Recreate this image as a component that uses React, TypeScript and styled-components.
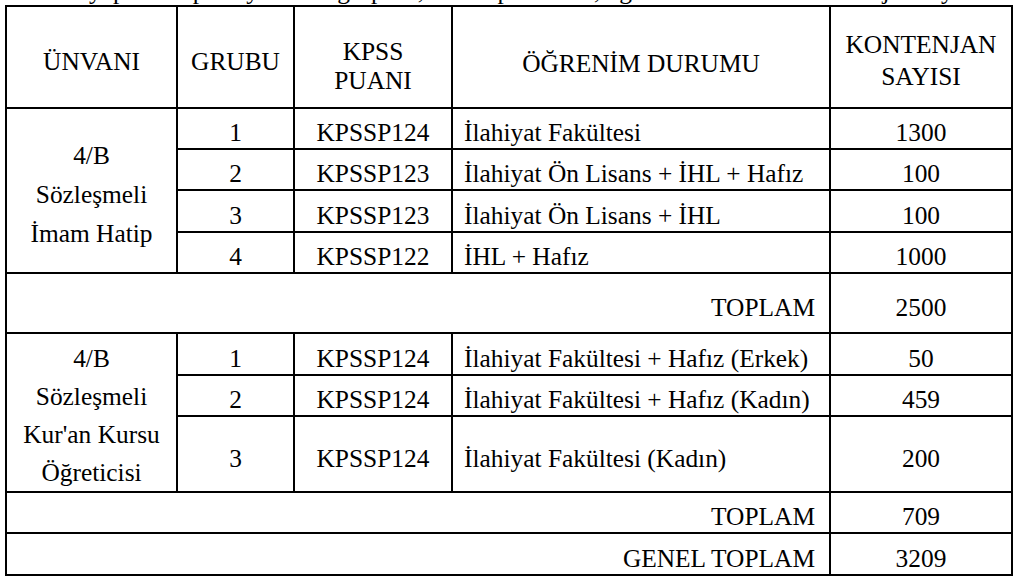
import React from 'react';
import styled, {createGlobalStyle} from 'styled-components';

const GlobalStyle = createGlobalStyle`
    html, body {
        margin: 0;
        padding: 0;
        background: #fff;
    }
    body {
        font-family: "Liberation Serif", "Times New Roman", serif;
        color: #000;
    }
`;

const Page = styled.div`
    width: 1024px;
    height: 585px;
    overflow: hidden;
    padding-left: 5px;
    box-sizing: border-box;
    font-family: "Liberation Serif", "Times New Roman", serif;
`;

// the sentence above the table is cut off by the screenshot, only its descenders show
const CutCaption = styled.div`
    height: 5px;
    overflow: hidden;
    font-size: 25.4px;
    line-height: 29px;
    text-align: center;
    width: 1008px;

    & > span {
        display: block;
        margin-top: -24px;
    }
`;

const Table = styled.table`
    border-collapse: collapse;
    table-layout: fixed;
    width: 1008px;
    font-family: "Liberation Serif", "Times New Roman", serif;
    font-size: 25.4px;
    color: #000;
`;

const Col = styled.col<{ $w: number }>`
    width: ${({$w}) => $w}px;
`;

const Row = styled.tr<{ $h: number }>`
    height: ${({$h}) => $h}px;
`;

type CellProps = {
    $align?: 'left' | 'center' | 'right';
    $nudge?: number;
    $lh?: number;
};

const Cell = styled.td<CellProps>`
    border: 2px solid #000;
    padding: ${({$nudge}) => $nudge ?? 8}px 12px 0 12px;
    text-align: ${({$align}) => $align ?? 'center'};
    vertical-align: middle;
    line-height: ${({$lh}) => $lh ? `${$lh}px` : '29px'};
    white-space: nowrap;
    overflow: hidden;
`;

const LeftCell = styled(Cell)`
    padding-left: 11px;
`;

const SumCell = styled(Cell)`
    padding-right: 14px;
`;

type Line = {
    group: string;
    score: string;
    education: string;
    quota: string;
    height: number;
};

type Block = {
    title: string[];
    titleNudge: number;
    titleLh: number;
    lines: Line[];
    total: string;
    totalHeight: number;
};

const blocks: Block[] = [
    {
        title: ['4/B', 'Sözleşmeli', 'İmam Hatip'],
        titleNudge: 8,
        titleLh: 39,
        lines: [
            {group: '1', score: 'KPSSP124', education: 'İlahiyat Fakültesi', quota: '1300', height: 41},
            {group: '2', score: 'KPSSP123', education: 'İlahiyat Ön Lisans + İHL + Hafız', quota: '100', height: 41},
            {group: '3', score: 'KPSSP123', education: 'İlahiyat Ön Lisans + İHL', quota: '100', height: 42},
            {group: '4', score: 'KPSSP122', education: 'İHL + Hafız', quota: '1000', height: 41},
        ],
        total: '2500',
        totalHeight: 60,
    },
    {
        title: ['4/B', 'Sözleşmeli', "Kur'an Kursu", 'Öğreticisi'],
        titleNudge: 4,
        titleLh: 38,
        lines: [
            {group: '1', score: 'KPSSP124', education: 'İlahiyat Fakültesi + Hafız (Erkek)', quota: '50', height: 42},
            {group: '2', score: 'KPSSP124', education: 'İlahiyat Fakültesi + Hafız (Kadın)', quota: '459', height: 41},
            {group: '3', score: 'KPSSP124', education: 'İlahiyat Fakültesi (Kadın)', quota: '200', height: 76},
        ],
        total: '709',
        totalHeight: 41,
    },
];

const Multiline = ({lines}: { lines: string[] }) => (
    <>
        {lines.map((l, i) => (
            <React.Fragment key={i}>
                {i > 0 && <br/>}
                {l}
            </React.Fragment>
        ))}
    </>
);

export const App = () => {
    return (
        <Page>
            <GlobalStyle/>
            <CutCaption>
                <span>Alımı yapılacak pozisyonların grupları, KPSS puan türü, öğrenim durumu ve kontenjan sayıları aşağıdaki gibidir.</span>
            </CutCaption>
            <Table>
                <colgroup>
                    <Col $w={171}/>
                    <Col $w={117}/>
                    <Col $w={158}/>
                    <Col $w={378}/>
                    <Col $w={182}/>
                </colgroup>
                <tbody>
                    <Row $h={102}>
                        <Cell>ÜNVANI</Cell>
                        <Cell>GRUBU</Cell>
                        <Cell $nudge={18}><Multiline lines={['KPSS', 'PUANI']}/></Cell>
                        <Cell $nudge={13}>ÖĞRENİM DURUMU</Cell>
                        <Cell $lh={32} $nudge={5}><Multiline lines={['KONTENJAN', 'SAYISI']}/></Cell>
                    </Row>
                    {blocks.map((block, b) => (
                        <React.Fragment key={b}>
                            {block.lines.map((line, i) => (
                                <Row $h={line.height} key={i}>
                                    {i === 0 && (
                                        <Cell rowSpan={block.lines.length} $lh={block.titleLh} $nudge={block.titleNudge}>
                                            <Multiline lines={block.title}/>
                                        </Cell>
                                    )}
                                    <Cell>{line.group}</Cell>
                                    <Cell>{line.score}</Cell>
                                    <LeftCell $align="left">{line.education}</LeftCell>
                                    <Cell>{line.quota}</Cell>
                                </Row>
                            ))}
                            <Row $h={block.totalHeight}>
                                <SumCell colSpan={4} $align="right">TOPLAM</SumCell>
                                <Cell>{block.total}</Cell>
                            </Row>
                        </React.Fragment>
                    ))}
                    <Row $h={42}>
                        <SumCell colSpan={4} $align="right">GENEL TOPLAM</SumCell>
                        <Cell>3209</Cell>
                    </Row>
                </tbody>
            </Table>
        </Page>
    );
};

export default App;
